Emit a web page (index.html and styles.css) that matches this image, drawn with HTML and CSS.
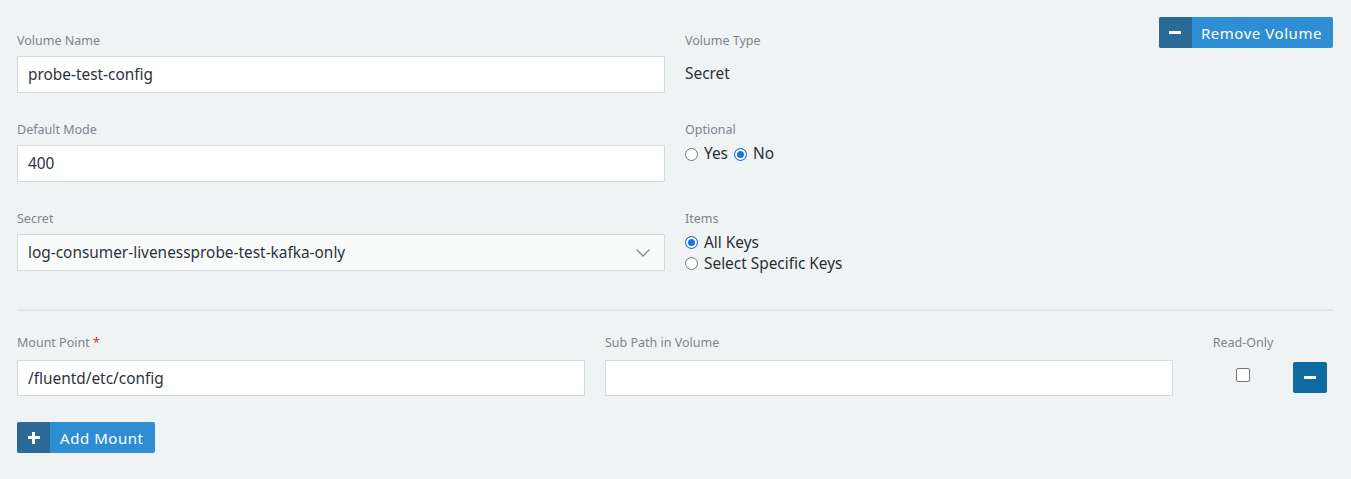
FILE: index.html
```html
<!DOCTYPE html>
<html>
<head>
<meta charset="utf-8">
<link rel="stylesheet" href="styles.css">
</head>
<body>
<div class="page">
  <div class="top-actions">
    <button class="btn btn-split">
      <span class="btn-icon"><span class="minus"></span></span>
      <span class="btn-text">Remove Volume</span>
    </button>
  </div>
  <div class="grid2">
    <div class="field">
      <label class="lbl">Volume Name</label>
      <div class="input">probe-test-config</div>
    </div>
    <div class="field">
      <label class="lbl">Volume Type</label>
      <div class="static">Secret</div>
    </div>
    <div class="field">
      <label class="lbl">Default Mode</label>
      <div class="input">400</div>
    </div>
    <div class="field">
      <label class="lbl">Optional</label>
      <div class="radios-inline">
        <span class="radio-item"><span class="radio"></span>Yes</span>
        <span class="radio-item"><span class="radio on"></span>No</span>
      </div>
    </div>
    <div class="field">
      <label class="lbl">Secret</label>
      <div class="input select">log-consumer-livenessprobe-test-kafka-only
        <svg class="chev" width="16" height="10" viewBox="0 0 16 10"><path d="M1.5 1.5 L8 8 L14.5 1.5" fill="none" stroke="#7c8790" stroke-width="1.3"/></svg>
      </div>
    </div>
    <div class="field">
      <label class="lbl">Items</label>
      <div class="radios-block">
        <span class="radio-item"><span class="radio on"></span>All Keys</span>
        <span class="radio-item"><span class="radio"></span>Select Specific Keys</span>
      </div>
    </div>
  </div>
  <hr class="sep">
  <div class="mount-row">
    <div class="field">
      <label class="lbl">Mount Point <span class="req">*</span></label>
      <div class="input">/fluentd/etc/config</div>
    </div>
    <div class="field">
      <label class="lbl">Sub Path in Volume</label>
      <div class="input"></div>
    </div>
    <div class="ro">
      <label class="lbl">Read-Only</label>
      <span class="checkbox"></span>
    </div>
    <div class="rm">
      <button class="btn-square"><span class="minus"></span></button>
    </div>
  </div>
  <div class="bottom-actions">
    <button class="btn btn-split">
      <span class="btn-icon"><span class="plus"></span></span>
      <span class="btn-text">Add Mount</span>
    </button>
  </div>
</div>
</body>
</html>
```

FILE: styles.css
```css
* { box-sizing: border-box; }
html, body { margin: 0; padding: 0; }
body {
  background: #f0f3f4;
  font-family: "Noto Sans", "Open Sans", sans-serif;
  color: #2b2f33;
}
.page {
  padding: 17px 18px 0 17px;
}
.top-actions {
  display: flex;
  justify-content: flex-end;
  height: 0;
}
.btn {
  border: 0;
  padding: 0;
  font-family: inherit;
  cursor: pointer;
}
.btn-split {
  display: flex;
  height: 31px;
  border-radius: 2px;
  overflow: hidden;
  background: #2f8ed3;
  color: #fff;
}
.btn-icon {
  width: 33px;
  background: #2b6a97;
  display: flex;
  align-items: center;
  justify-content: center;
}
.btn-text {
  display: flex;
  align-items: center;
  padding: 0 11px 0 9px;
  font-size: 15px;
  letter-spacing: 0.55px;
}
.minus {
  display: block;
  width: 12px;
  height: 3px;
  background: #fff;
}
.plus {
  display: block;
  width: 12px;
  height: 12px;
  position: relative;
}
.plus::before, .plus::after {
  content: "";
  position: absolute;
  background: #fff;
}
.plus::before { left: 0; top: 4.5px; width: 12px; height: 3px; }
.plus::after { left: 4.5px; top: 0; width: 3px; height: 12px; }
.grid2 {
  display: grid;
  grid-template-columns: 648px 1fr;
  column-gap: 20px;
  padding-top: 16px;
  row-gap: 0;
}
.field {
  display: flex;
  flex-direction: column;
  margin-bottom: 17px;
}
.grid2 .field { height: 72px; margin-bottom: 17px; }
.lbl {
  font-size: 12.5px;
  color: #7c858d;
  line-height: 16px;
  height: 16px;
  margin-bottom: 7px;
}
.req { color: #e0343a; }
.input {
  height: 37px;
  background: #fff;
  border: 1px solid #d4dadd;
  font-size: 15.4px;
  line-height: 35px;
  padding: 0 10px;
  color: #2d323a;
}
.select {
  background: #f9fbfa;
  display: flex;
  justify-content: space-between;
  align-items: center;
}
.chev { margin-right: 3px; }
.static {
  font-size: 15.4px;
  color: #2d323a;
  line-height: 18px;
  padding-top: 9px;
}
.radios-inline {
  display: flex;
  gap: 6px;
  font-size: 15.4px;
  line-height: 18px;
  padding-top: 0;
}
.radios-block {
  display: flex;
  flex-direction: column;
  font-size: 15.4px;
  line-height: 21px;
  margin-top: -2px;
}
.radio-item {
  display: flex;
  align-items: center;
}
.radio {
  width: 13px;
  height: 13px;
  border: 1px solid #767676;
  border-radius: 50%;
  background: #fff;
  margin-right: 6px;
  margin-left: 0;
  display: inline-block;
}
.radio.on {
  border: 1.5px solid #1a73e8;
  box-shadow: inset 0 0 0 2px #fff;
  background: #1a73e8;
}
.sep {
  border: 0;
  border-top: 2px solid #dfe3e6;
  margin: 7px 0 26px 0;
  position: relative;
  top: 2px;
}
.mount-row {
  display: grid;
  grid-template-columns: 568px 568px 100px 1fr;
  column-gap: 20px;
}
.mount-row .field { margin-bottom: 0; }
.mount-row .lbl { margin-bottom: 9px; }
.mount-row .input { height: 36px; }
.ro {
  display: flex;
  flex-direction: column;
  align-items: center;
}
.checkbox {
  width: 14px;
  height: 14px;
  border: 1px solid #767676;
  border-radius: 2px;
  background: #fff;
  margin-top: 8px;
}
.rm {
  display: flex;
  padding-top: 27px;
  margin-left: -20px;
}
.btn-square {
  width: 34px;
  height: 31px;
  border: 0;
  border-radius: 2px;
  background: #0e6aa1;
  display: flex;
  align-items: center;
  justify-content: center;
}
.btn-square .minus { width: 12px; height: 3px; }
.bottom-actions {
  display: flex;
  padding-top: 26px;
}
.bottom-actions .btn-icon { width: 33px; background: #2b6a97; }
.bottom-actions .btn-text { padding: 0 11px 0 10px; }
```
